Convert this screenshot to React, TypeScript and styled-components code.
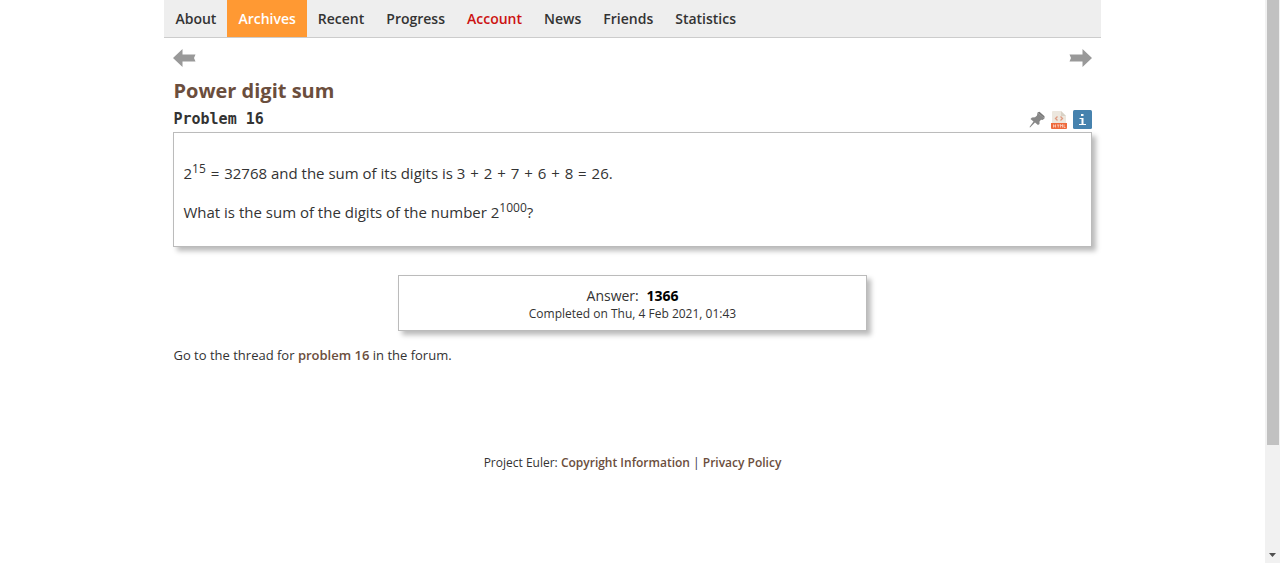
import React from "react";
import styled, { createGlobalStyle } from "styled-components";

const GlobalStyle = createGlobalStyle`
  body {
    margin: 0;
    background: #fff;
    color: #333;
    font: 15px/20px "Open Sans", "Noto Sans", sans-serif;
  }
`;

const Page = styled.div`
  display: flex;
  min-height: 100vh;
`;

const Content = styled.div`
  flex: 1;
  display: flex;
  flex-direction: column;
  align-items: center;
`;

const Container = styled.div`
  width: 74%;
`;

const Nav = styled.nav`
  display: flex;
  background: #eee;
  border-bottom: 1px solid #ccc;
`;

const NavLink = styled.a<{ $active?: boolean; $alert?: boolean }>`
  padding: 0 11px;
  font-size: 14px;
  font-weight: 600;
  line-height: 37px;
  text-decoration: none;
  color: ${(p) => (p.$active ? "#fff" : p.$alert ? "#c11" : "#333")};
  background: ${(p) => (p.$active ? "#f93" : "transparent")};
`;

const Main = styled.main`
  padding: 10px 9px 0;
`;

const Row = styled.div`
  display: flex;
  justify-content: space-between;
`;

const IconLink = styled.a`
  display: block;

  svg {
    display: block;
  }
`;

const Title = styled.h2`
  margin: 10px 0 0;
  font-size: 20px;
  line-height: 26px;
  font-weight: 700;
  color: #6b4e3d;
`;

const ProblemNumber = styled.h3`
  margin: 0;
  padding-top: 2px;
  font: 700 15px/26px "DejaVu Sans Mono", monospace;
`;

const Tools = styled.div`
  display: flex;
  align-items: flex-end;
  gap: 6px;
  padding-bottom: 3px;
`;

const Panel = styled.section`
  border: 1px solid #bbb;
  box-shadow: 4px 4px 5px #bbb;
`;

const Statement = styled(Panel)`
  padding: 30px 9px 24px;
`;

const Paragraph = styled.p`
  margin: 0;
  padding-bottom: 19px;

  &:last-child {
    padding-bottom: 0;
  }
`;

const Exponent = styled.sup`
  font-size: 12px;
  line-height: 0;
`;

const Operator = styled.span`
  margin: 0 1px;
`;

const Answer = styled(Panel)`
  box-sizing: border-box;
  width: 51%;
  margin: 28px auto 0;
  padding: 10px 0 8px;
  text-align: center;
  font-size: 14px;
`;

const AnswerValue = styled.b`
  margin-left: 4px;
  color: #000;
`;

const Completed = styled.div`
  font-size: 12px;
  line-height: 16px;
`;

const Thread = styled.p`
  margin: 14px 0 0;
  font-size: 13px;
`;

const TextLink = styled.a`
  font-weight: 600;
  color: #6b4e3d;
  text-decoration: none;
`;

const Footer = styled.footer`
  margin-top: 88px;
  text-align: center;
  font-size: 12px;
`;

const Scrollbar = styled.div`
  display: flex;
  flex-direction: column;
  justify-content: space-between;
  align-items: center;
  width: 15px;
  background: #f1f1f1;
`;

const Thumb = styled.div`
  width: 12px;
  height: 79vh;
  background: #c1c1c1;
`;

const ScrollArrow = styled.svg`
  margin-bottom: 6px;
`;

const links = ["About", "Archives", "Recent", "Progress", "Account", "News", "Friends", "Statistics"];

const ArrowIcon = ({ flipped = false }: { flipped?: boolean }) => (
  <svg width="24" height="20" viewBox="0 0 24 20" aria-hidden="true">
    <path
      d="M0 10 9.500 1v5.500h13l-1.500 3.500 1.500 3.500h-13V19Z"
      fill="#999"
      transform={flipped ? "matrix(-1 0 0 1 24 0)" : undefined}
    />
  </svg>
);

const PinIcon = () => (
  <svg width="16" height="18" viewBox="0 0 16 18" aria-hidden="true">
    <path d="M8.500 1.500 15.500 7.500 13.500 9 12 8.800 10.500 10.500 10.500 13 9 14 6 11.500 1 16.500.5 16 4.500 10.500 1.500 8 3 6.500 6 6.300 8 4.500Z" fill="#888" />
    <path d="m8.500 1.500 2-.8 5 4.500v2.300Z" fill="#777" />
  </svg>
);

const HtmlIcon = () => (
  <svg width="16" height="18" viewBox="0 0 16 18" aria-hidden="true">
    <path d="M1 1Q1 0 2 0h8l5 5v8H1Z" fill="#ece7de" />
    <path d="M10 0v5h5Z" fill="#d8d2c6" />
    <path d="M6.500 5.500 4.500 7.500l2 2M9.500 5.500l2 2-2 2" fill="none" stroke="#e09a80" strokeWidth="1.300" />
    <path d="M0 12h16v5q0 1-1 1H1q-1 0-1-1Z" fill="#ee6a3c" />
    <path d="M2.500 13.500v3m2-3v3m-2-1.500h2M6 14h2.500M7.250 14v2.500M9.500 16.500v-3l1 1.500 1-1.500v3M13 13.500v3h1.500" fill="none" stroke="#fbd5c6" strokeWidth=".8" />
  </svg>
);

const InfoIcon = () => (
  <svg width="19" height="19" viewBox="0 0 19 19" aria-hidden="true">
    <rect width="19" height="19" rx="1.500" fill="#4682ae" />
    <rect x="8" y="4" width="2.500" height="2" fill="#fff" />
    <path d="M6.500 8h4v6H13v1H6v-1h2.500V9h-2Z" fill="#fff" />
  </svg>
);

export default function App() {
  return (
    <Page>
      <GlobalStyle />
      <Content>
        <Container>
          <Nav>
            {links.map((name) => (
              <NavLink key={name} href="#" $active={name === "Archives"} $alert={name === "Account"}>
                {name}
              </NavLink>
            ))}
          </Nav>
          <Main>
            <Row>
              <IconLink href="#" aria-label="Previous problem"><ArrowIcon /></IconLink>
              <IconLink href="#" aria-label="Next problem"><ArrowIcon flipped /></IconLink>
            </Row>
            <Title>Power digit sum</Title>
            <Row>
              <ProblemNumber>Problem 16</ProblemNumber>
              <Tools>
                <IconLink href="#" aria-label="Permalink"><PinIcon /></IconLink>
                <IconLink href="#" aria-label="HTML version"><HtmlIcon /></IconLink>
                <IconLink href="#" aria-label="Problem information"><InfoIcon /></IconLink>
              </Tools>
            </Row>
            <Statement>
              <Paragraph>
                2<Exponent>15</Exponent> <Operator>=</Operator> 32768 and the sum of its digits is 3{" "}
                <Operator>+</Operator> 2 <Operator>+</Operator> 7 <Operator>+</Operator> 6{" "}
                <Operator>+</Operator> 8 <Operator>=</Operator> 26.
              </Paragraph>
              <Paragraph>
                What is the sum of the digits of the number 2<Exponent>1000</Exponent>?
              </Paragraph>
            </Statement>
            <Answer>
              <div>Answer: <AnswerValue>1366</AnswerValue></div>
              <Completed>Completed on Thu, 4 Feb 2021, 01:43</Completed>
            </Answer>
            <Thread>
              Go to the thread for <TextLink href="#">problem 16</TextLink> in the forum.
            </Thread>
          </Main>
          <Footer>
            Project Euler: <TextLink href="#">Copyright Information</TextLink> |{" "}
            <TextLink href="#">Privacy Policy</TextLink>
          </Footer>
        </Container>
      </Content>
      <Scrollbar aria-hidden="true">
        <Thumb />
        <ScrollArrow width="7" height="4" viewBox="0 0 7 4">
          <path d="M0 0h7L3.500 4Z" fill="#505050" />
        </ScrollArrow>
      </Scrollbar>
    </Page>
  );
}
